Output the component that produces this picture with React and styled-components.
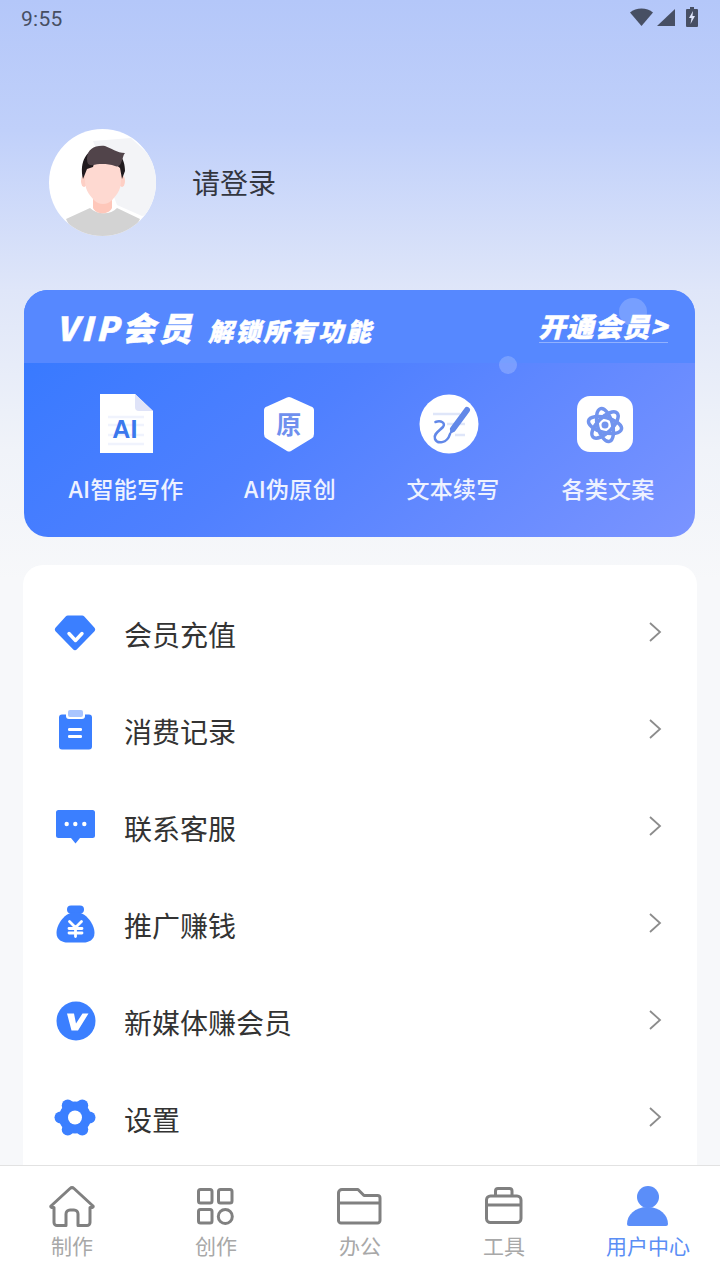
import React from 'react';
import styled, { createGlobalStyle } from 'styled-components';

const GlobalStyle = createGlobalStyle`
    html, body {
        margin: 0;
        padding: 0;
        background: #f7f8fa;
    }
    * {
        box-sizing: border-box;
    }
`;

const FONT = `'Noto Sans CJK SC', 'Noto Sans', sans-serif`;

const Page = styled.div`
    width: 720px;
    height: 1280px;
    display: flex;
    flex-direction: column;
    overflow: hidden;
    font-family: ${FONT};
    background: linear-gradient(180deg, #b4c7f9 0%, #c0d0fa 130px, #dfe6f9 290px, #f0f3f9 450px, #f7f8fa 580px);
`;

const Main = styled.main`
    flex: 1;
    min-height: 0;
    overflow: hidden;
`;

const StatusBar = styled.div`
    height: 38px;
    padding: 0 22px 0 21px;
    display: flex;
    align-items: center;
    justify-content: space-between;
    color: #474f63;
`;

const Time = styled.span`
    font-family: Roboto, sans-serif;
    font-size: 21px;
    letter-spacing: 0.3px;
`;

const StatusIcons = styled.div`
    display: flex;
    align-items: center;
    gap: 4px;
    margin-bottom: 4px;
`;

const Profile = styled.div`
    margin-top: 91px;
    padding-left: 49px;
    display: flex;
    align-items: center;
    gap: 36px;
    height: 107px;
`;

const Avatar = styled.svg`
    width: 107px;
    height: 107px;
    display: block;
`;

const LoginText = styled.div`
    font-size: 28px;
    line-height: 40px;
    color: #33363f;
    margin-bottom: 2px;
`;

const VipCard = styled.section`
    position: relative;
    margin: 54px 25px 0 24px;
    height: 247px;
    border-radius: 24px;
    overflow: hidden;
    background: linear-gradient(140deg, #3378ff 0%, #4f80ff 45%, #7b94ff 100%);
`;

const VipHead = styled.div`
    height: 73px;
    padding: 0 27px 0 32px;
    display: flex;
    align-items: center;
    justify-content: space-between;
    color: #fff;
    background: #5688ff;
`;

const VipTitle = styled.div`
    display: flex;
    align-items: baseline;
    gap: 13px;
    font-weight: 900;
    font-style: italic;
    -webkit-text-stroke: 0.5px #fff;
`;

const VipName = styled.span`
    font-size: 33px;
    letter-spacing: 3.5px;
`;

const VipSlogan = styled.span`
    font-size: 25px;
    letter-spacing: 2.6px;
`;

const OpenLink = styled.span`
    font-size: 27px;
    font-weight: 900;
    font-style: italic;
    line-height: 30px;
    letter-spacing: 1px;
    padding-bottom: 1px;
    border-bottom: 1px solid rgba(255, 255, 255, 0.35);
    -webkit-text-stroke: 0.5px #fff;
`;

const Bubble = styled.span`
    position: absolute;
    left: ${(p) => p.$left}px;
    top: ${(p) => p.$top}px;
    width: ${(p) => p.$size}px;
    height: ${(p) => p.$size}px;
    border-radius: 50%;
    background: rgba(255, 255, 255, 0.2);
`;

const VipGrid = styled.div`
    display: grid;
    grid-template-columns: 164px 164px 162px 148px;
    padding: 31px 0 0 20px;
`;

const VipItem = styled.div`
    display: flex;
    flex-direction: column;
    align-items: center;
    color: #eef2ff;
    font-size: 23px;
    font-weight: 500;
    line-height: 32px;
    letter-spacing: 0.3px;
`;

const VipIcon = styled.svg`
    width: 60px;
    height: 60px;
    margin-bottom: 18px;
    margin-left: ${(p) => p.$nudge || 0}px;
    display: block;
`;

const Menu = styled.section`
    margin: 28px 23px 0 23px;
    padding-top: 20px;
    height: 640px;
    background: #fff;
    border-radius: 20px 20px 0 0;
`;

const Row = styled.div`
    height: 97px;
    padding: 0 35px 0 31px;
    display: flex;
    align-items: center;
`;

const RowIcon = styled.svg`
    width: 42px;
    height: 42px;
    display: block;
    flex-shrink: 0;
`;

const RowLabel = styled.span`
    flex: 1;
    margin-left: 28px;
    font-size: 28px;
    line-height: 40px;
    color: #333;
`;

const Chevron = styled.svg`
    width: 14px;
    height: 20px;
    display: block;
    margin-bottom: 4px;
`;

const TabBar = styled.nav`
    height: 115px;
    flex-shrink: 0;
    display: grid;
    grid-template-columns: repeat(5, 144px);
    background: #fff;
    border-top: 1px solid #e2e2e2;
`;

const Tab = styled.div`
    display: flex;
    flex-direction: column;
    align-items: center;
    padding-top: 15px;
    font-size: 21px;
    line-height: 30px;
    color: ${(p) => (p.$active ? '#5b8ef5' : '#a8a8a8')};
`;

const TabIcon = styled.svg`
    width: 48px;
    height: 48px;
    display: block;
    margin-bottom: 1px;
`;

const BLUE = '#3b7fff';

const GEAR_TEETH = [0, 60, 120, 180, 240, 300];

const menuItems = [
    {
        label: '会员充值',
        icon: (
            <>
                <path d="M14 2.500h14a3 3 0 0 1 2.300 1l10 11a3 3 0 0 1 0 4L23.200 36a3 3 0 0 1-4.400 0L1.700 18.500a3 3 0 0 1 0-4l10-11a3 3 0 0 1 2.300-1z" fill={BLUE} />
                <path d="M15 20.500l6.500 7 6.500-7" fill="none" stroke="#fff" strokeWidth="3.400" strokeLinecap="round" strokeLinejoin="round" />
            </>
        ),
    },
    {
        label: '消费记录',
        icon: (
            <>
                <rect x="14" y="0" width="15" height="7" rx="2" fill="#a9c5ff" />
                <path d="M8 4.500h4v1.500a3 3 0 0 0 3 3h13a3 3 0 0 0 3-3V4.500h4a3 3 0 0 1 3 3v29a3 3 0 0 1-3 3H8a3 3 0 0 1-3-3v-29a3 3 0 0 1 3-3z" fill={BLUE} />
                <rect x="14" y="18" width="14" height="3" rx="1.200" fill="#fff" />
                <rect x="14" y="25" width="14" height="3" rx="1.200" fill="#fff" />
            </>
        ),
    },
    {
        label: '联系客服',
        icon: (
            <>
                <path d="M4.500 3h34A2.500 2.500 0 0 1 41 5.500v23a2.500 2.500 0 0 1-2.500 2.500H26l-4.500 5.500L17 31H4.500A2.500 2.500 0 0 1 2 28.500v-23A2.500 2.500 0 0 1 4.500 3z" fill={BLUE} />
                <circle cx="12.700" cy="17" r="2.200" fill="#fff" />
                <circle cx="21.300" cy="17" r="2.200" fill="#fff" />
                <circle cx="30.300" cy="17" r="2.200" fill="#fff" />
            </>
        ),
    },
    {
        label: '推广赚钱',
        icon: (
            <>
                <rect x="13" y="1.500" width="17" height="8" rx="4" fill={BLUE} />
                <path d="M21.500 8C32 8 40.500 20 40.500 29c0 7-6 9.500-11 9.500h-16C8.500 38.500 2.500 36 2.500 29c0-9 8.500-21 19-21z" fill={BLUE} />
                <path d="M15.500 17.500l6 6 6-6M21.500 23.500v9M15 24.500h13M15 29h13" fill="none" stroke="#fff" strokeWidth="2.800" strokeLinecap="round" />
            </>
        ),
    },
    {
        label: '新媒体赚会员',
        icon: (
            <>
                <circle cx="22" cy="20" r="19.500" fill={BLUE} />
                <path d="M13 12.500h7l2 10 6.500-10h6L24 29.500h-6.500z" fill="#fff" />
            </>
        ),
    },
    {
        label: '设置',
        icon: (
            <>
                <circle cx="21" cy="19.500" r="16" fill={BLUE} />
                {GEAR_TEETH.map((angle) => (
                    <circle
                        key={angle}
                        cx={21 + 14.5 * Math.cos((angle * Math.PI) / 180)}
                        cy={19.5 + 14 * Math.sin((angle * Math.PI) / 180)}
                        r="6"
                        fill={BLUE}
                    />
                ))}
                <circle cx="21" cy="19.500" r="7" fill="#fff" />
            </>
        ),
    },
];

const tabs = [
    {
        label: '制作',
        icon: (
            <path d="M22 7.500a3 3 0 0 1 4 0l19 17.500a.8.8 0 0 1-.5 1.400H42v15.100a3 3 0 0 1-3 3h-9V33a4 4 0 0 0-4-4h-4a4 4 0 0 0-4 4v11.500H9a3 3 0 0 1-3-3V26.400H3.500a.8.8 0 0 1-.5-1.400z" />
        ),
    },
    {
        label: '创作',
        icon: (
            <>
                <rect x="6.500" y="8.500" width="13.500" height="13.500" rx="2" />
                <rect x="26.500" y="8.500" width="13.500" height="13.500" rx="2" />
                <rect x="6.500" y="28.500" width="13.500" height="13.500" rx="2" />
                <circle cx="33.300" cy="35.500" r="7" />
            </>
        ),
    },
    {
        label: '办公',
        icon: (
            <>
                <path d="M2.500 12a3.500 3.500 0 0 1 3.500-3.500h16l6 6h13.500a2.500 2.500 0 0 1 2.500 2.500v22.500a2.500 2.500 0 0 1-2.500 2.500H5a2.500 2.500 0 0 1-2.500-2.500z" />
                <path d="M2.500 22h41.500" />
            </>
        ),
    },
    {
        label: '工具',
        icon: (
            <>
                <rect x="6.500" y="15" width="34.500" height="26.500" rx="4" />
                <path d="M6.500 24h34.500M15.500 15v-5a2.500 2.500 0 0 1 2.500-2.500h11.500a2.500 2.500 0 0 1 2.500 2.500v5" />
            </>
        ),
    },
];

const App = () => (
    <Page>
        <GlobalStyle />
        <Main>
            <StatusBar>
                <Time>9:55</Time>
                <StatusIcons>
                    <svg width="23" height="18" viewBox="0 0 23 18">
                        <path d="M0 4.500C6-1 17-1 23 4.500L11.500 18z" fill="#474f63" />
                    </svg>
                    <svg width="18" height="17" viewBox="0 0 18 17">
                        <path d="M18 0v17H0z" fill="#474f63" />
                    </svg>
                    <svg width="12" height="20" viewBox="0 0 12 20" style={{ marginLeft: 7 }}>
                        <path d="M4 0h4v2h3a1 1 0 0 1 1 1v16a1 1 0 0 1-1 1H1a1 1 0 0 1-1-1V3a1 1 0 0 1 1-1h3z" fill="#474f63" />
                        <path d="M7 4L3 11h2.500L4.500 17 9 9H6.500z" fill="#dfe6fb" />
                    </svg>
                </StatusIcons>
            </StatusBar>

            <Profile>
                <Avatar viewBox="0 0 107 107">
                    <defs>
                        <clipPath id="face-clip">
                            <circle cx="53.500" cy="53.500" r="53.500" />
                        </clipPath>
                    </defs>
                    <g clipPath="url(#face-clip)">
                        <rect width="107" height="107" fill="#fff" />
                        <path d="M44 12L82 9 107 32V84L93 87 68 76z" fill="#f3f4f7" />
                        <path d="M17 90L41 79C48 86 62 86 68 79L91 90 80 112H28z" fill="#d3d3d3" />
                        <path d="M44 60h19v19c-3 7-16 7-19 0z" fill="#fec7ba" />
                        <ellipse cx="35" cy="52" rx="3" ry="6" fill="#fdcfc5" />
                        <ellipse cx="73" cy="52" rx="3" ry="6" fill="#fdcfc5" />
                        <path d="M36 40C36 26 71 26 72 40V52C72 62 66 68 62 72 58 76 50 76 46 72 42 68 36 62 36 52z" fill="#fed9d1" />
                        <path d="M34 50C30 32 38 21 50 18L44 38 38 40z" fill="#201a1e" />
                        <path d="M73 50L76 42C76 35 74 30 72 28L62 32 71 39z" fill="#201a1e" />
                        <path d="M38 30C38 20 46 16 56 17 62 19 68 24 76 24 74 26 74 30 72 34 71 37 68 38 66 37 58 34 48 35 44 36 40 37 38 35 38 30z" fill="#51444a" />
                    </g>
                </Avatar>
                <LoginText>请登录</LoginText>
            </Profile>

            <VipCard>
                <VipHead>
                    <VipTitle>
                        <VipName>VIP会员</VipName>
                        <VipSlogan>解锁所有功能</VipSlogan>
                    </VipTitle>
                    <OpenLink>开通会员&gt;</OpenLink>
                </VipHead>
                <Bubble $left={595} $top={8} $size={28} />
                <Bubble $left={475} $top={66} $size={18} />
                <VipGrid>
                    <VipItem>
                        <VipIcon viewBox="0 0 60 60" $nudge={-2}>
                            <path d="M5 0h35l18 17v42H5z" fill="#fff" />
                            <path d="M40 0l18 17H44a4 4 0 0 1-4-4z" fill="#dfe3f8" />
                            <path d="M13 23h36M13 31h36M13 41h36M13 50h36" stroke="#f0f3fd" strokeWidth="2.500" />
                            <text x="30" y="44" textAnchor="middle" fontFamily="'Liberation Sans', sans-serif" fontWeight="700" fontSize="25" fill="#3b78ed">AI</text>
                        </VipIcon>
                        AI智能写作
                    </VipItem>
                    <VipItem>
                        <VipIcon viewBox="0 0 60 60" $nudge={-2}>
                            <path d="M28 3.500a4 4 0 0 1 4 0l20 9a4 4 0 0 1 3 4V40a5 5 0 0 1-2.500 4.500L32 57a4 4 0 0 1-4 0L7.500 44.500A5 5 0 0 1 5 40V16.500a4 4 0 0 1 3-4z" fill="#fff" />
                            <text x="30" y="40" textAnchor="middle" fontFamily="'Noto Sans CJK SC', sans-serif" fontWeight="700" fontSize="25" fill="#6f90ee">原</text>
                        </VipIcon>
                        AI伪原创
                    </VipItem>
                    <VipItem>
                        <VipIcon viewBox="0 0 60 60" $nudge={-8}>
                            <circle cx="30" cy="30" r="29.500" fill="#fff" />
                            <path d="M14 20h27M28 30h18M36 41h10" stroke="#dfe6f9" strokeWidth="2.500" />
                            <path d="M16.500 28C22 26 27 29 24 33 20 37 14 40 16 45 18 50 28 50 31 40" fill="none" stroke="#6288e8" strokeWidth="2.500" strokeLinecap="round" />
                            <path d="M48 16L34 35" stroke="#6288e8" strokeWidth="6" strokeLinecap="round" />
                            <path d="M32 34l4 3-6 4z" fill="#6288e8" />
                        </VipIcon>
                        文本续写
                    </VipItem>
                    <VipItem>
                        <VipIcon viewBox="0 0 60 60" $nudge={-6}>
                            <rect x="2" y="2" width="56" height="56" rx="13" fill="#fff" />
                            <g fill="none" stroke="#7294ee" strokeWidth="3.500">
                                <ellipse cx="30" cy="31" rx="7.500" ry="17" transform="rotate(-15 30 31)" />
                                <ellipse cx="30" cy="31" rx="7.500" ry="17" transform="rotate(45 30 31)" />
                                <ellipse cx="30" cy="31" rx="7.500" ry="17" transform="rotate(105 30 31)" />
                            </g>
                            <circle cx="30" cy="31" r="3.500" fill="#7294ee" />
                        </VipIcon>
                        各类文案
                    </VipItem>
                </VipGrid>
            </VipCard>

            <Menu>
                {menuItems.map((item) => (
                    <Row key={item.label}>
                        <RowIcon viewBox="0 0 42 42">{item.icon}</RowIcon>
                        <RowLabel>{item.label}</RowLabel>
                        <Chevron viewBox="0 0 14 20">
                            <path d="M2 1l10 9-10 9" fill="none" stroke="#8c8c8c" strokeWidth="1.800" />
                        </Chevron>
                    </Row>
                ))}
            </Menu>
        </Main>

        <TabBar>
            {tabs.map((tab) => (
                <Tab key={tab.label}>
                    <TabIcon viewBox="0 0 48 48" fill="none" stroke="#808080" strokeWidth="3" strokeLinejoin="round">
                        {tab.icon}
                    </TabIcon>
                    {tab.label}
                </Tab>
            ))}
            <Tab $active>
                <TabIcon viewBox="0 0 48 48">
                    <circle cx="24" cy="16" r="11" fill="#5b8ef9" />
                    <path d="M3 43c0-9 8-17 20.500-17S44 34 44 43a2 2 0 0 1-2 2H5a2 2 0 0 1-2-2z" fill="#5b8ef9" />
                </TabIcon>
                用户中心
            </Tab>
        </TabBar>
    </Page>
);

export default App;
